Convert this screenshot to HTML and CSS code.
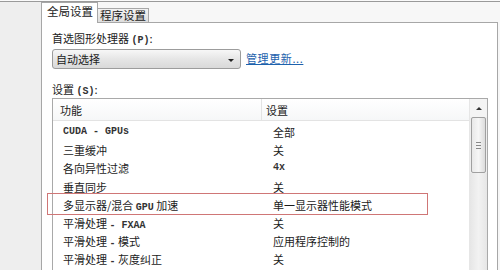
FILE: index.html
```html
<!DOCTYPE html>
<html>
<head>
<meta charset="utf-8">
<link rel="stylesheet" href="styles.css">
</head>
<body>
<div class="win">
  <div class="side"></div>
  <div class="main">
    <div class="tabs">
      <div class="tab active">全局设置</div>
      <div class="tab">程序设置</div>
    </div>
    <div class="panel">
      <div class="label">首选图形处理器 <span class="lat">(P)</span>:</div>
      <div class="pickrow">
        <div class="combo"><span>自动选择</span><span class="arrow"></span></div>
        <a class="link">管理更新...</a>
      </div>
      <div class="label label2">设置 <span class="lat">(S)</span>:</div>
      <div class="list">
        <div class="grid">
          <div class="head"><div class="h1">功能</div><div class="h2">设置</div></div>
          <div class="row"><div class="c1 lat">CUDA - GPUs</div><div class="c2">全部</div></div>
          <div class="row"><div class="c1">三重缓冲</div><div class="c2">关</div></div>
          <div class="row"><div class="c1">各向异性过滤</div><div class="c2 lat">4x</div></div>
          <div class="row"><div class="c1">垂直同步</div><div class="c2">关</div></div>
          <div class="row"><div class="c1">多显示器/混合 <span class="lat">GPU</span> 加速</div><div class="c2">单一显示器性能模式</div></div>
          <div class="row"><div class="c1">平滑处理 <span class="lat">- FXAA</span></div><div class="c2">关</div></div>
          <div class="row"><div class="c1">平滑处理 <span class="lat">-</span> 模式</div><div class="c2">应用程序控制的</div></div>
          <div class="row"><div class="c1">平滑处理 <span class="lat">-</span> 灰度纠正</div><div class="c2">关</div></div>
        </div>
        <div class="scroll">
          <div class="sbtn"><span class="up"></span></div>
          <div class="thumb"><span class="grip"></span></div>
          <div class="track"></div>
        </div>
        <div class="mark"></div>
      </div>
    </div>
  </div>
</div>
</body>
</html>
```
FILE: styles.css
```css
html, body {
  margin: 0;
  padding: 0;
  background: #fafafa;
  overflow: hidden;
}
body {
  font-family: "Noto Sans CJK SC", "Noto Sans", sans-serif;
  font-size: 11px;
  color: #1b1b1b;
}
.lat {
  font-family: "Liberation Mono", "DejaVu Sans Mono", monospace;
  font-size: 10px;
  font-weight: bold;
  color: #333;
}
.win {
  margin-top: 1px;
  border-top: 1px solid #9a9a9a;
  height: 268px;
  display: flex;
}
.side {
  width: 41px;
  background: #eeeeee;
  flex: none;
}
.main {
  flex: 1;
  display: flex;
  flex-direction: column;
  padding-right: 2px;
  background: #f7f7f7;
}
.tabs {
  height: 20px;
  display: flex;
  align-items: flex-end;
  position: relative;
  z-index: 1;
}
.tab {
  box-sizing: border-box;
  height: 14px;
  width: 51px;
  flex: none;
  border: 1px solid #a7a7a7;
  border-bottom: none;
  border-left: none;
  background: linear-gradient(#f3f3f3, #dddddd);
  font-size: 11.5px;
  line-height: 13px;
  padding-left: 2px;
  white-space: nowrap;
  overflow: hidden;
}
.tab.active {
  height: 21px;
  width: 57px;
  border-left: 1px solid #a7a7a7;
  background: #fff;
  padding-left: 5px;
  line-height: 17px;
  margin-bottom: -1px;
}
.panel {
  flex: 1;
  background: #fff;
  border: 1px solid #a7a7a7;
  border-bottom: none;
  padding: 8px 0 0 10px;
}
.label {
  height: 14px;
  line-height: 14px;
}
.label2 {
  margin-top: 13px;
}
.pickrow {
  display: flex;
  align-items: center;
  margin-top: 4px;
}
.combo {
  box-sizing: border-box;
  width: 189px;
  height: 20px;
  border: 1px solid #9c9c9c;
  border-radius: 3px;
  background: linear-gradient(#f7f7f7, #e4e4e4 55%, #d9d9d9);
  display: flex;
  align-items: center;
  justify-content: space-between;
  padding: 0 6px 0 3px;
}
.arrow {
  width: 0;
  height: 0;
  border-left: 3px solid transparent;
  border-right: 3px solid transparent;
  border-top: 3px solid #222;
  margin-top: 2px;
}
.link {
  margin-left: 5px;
  color: #1d62ad;
  text-decoration: underline;
  line-height: 14px;
  margin-top: -2px;
  letter-spacing: 0.6px;
}
.list {
  position: relative;
  box-sizing: border-box;
  margin-top: 2px;
  width: 436px;
  height: 180px;
  border: 1px solid #a9a9a9;
  border-bottom: none;
  display: flex;
}
.grid {
  flex: 1;
}
.head {
  height: 22px;
  box-sizing: border-box;
  border-bottom: 1px solid #e3e3e3;
  background: linear-gradient(#ffffff, #f6f7f8);
  display: flex;
  align-items: center;
}
.h1 {
  width: 209px;
  box-sizing: border-box;
  padding-left: 7px;
  border-right: 1px solid #e3e3e3;
  height: 22px;
  line-height: 22px;
}
.h2 {
  padding-left: 4px;
}
.row {
  height: 18.2px;
  line-height: 18.2px;
  display: flex;
  white-space: nowrap;
}
.head + .row {
  margin-top: 2px;
}
.c1 {
  box-sizing: border-box;
  width: 220px;
  padding-left: 10px;
  flex: none;
}
.c2 {
  width: 150px;
}
.scroll {
  width: 17px;
  flex: none;
  display: flex;
  flex-direction: column;
  background: #eeeeee;
  border-left: 1px solid #e6e6e6;
}
.sbtn {
  height: 18px;
  display: flex;
  align-items: center;
  justify-content: center;
  background: #f4f4f4;
}
.up {
  width: 0;
  height: 0;
  border-left: 3px solid transparent;
  border-right: 3px solid transparent;
  border-bottom: 3px solid #333;
}
.thumb {
  box-sizing: border-box;
  height: 56px;
  margin: 0 1px;
  border: 1px solid #a0a0a0;
  border-radius: 2px;
  background: linear-gradient(90deg, #e8e8e8, #f6f6f6 50%, #dcdcdc);
  display: flex;
  align-items: center;
  justify-content: center;
}
.grip {
  width: 5px;
  height: 5px;
  border-top: 1px solid #888;
  border-bottom: 1px solid #888;
  background: linear-gradient(#888, #888) center / 5px 1px no-repeat;
}
.track {
  flex: 1;
  background: linear-gradient(90deg, #e6e6e6, #f2f2f2 50%, #e6e6e6);
}
.mark {
  position: absolute;
  left: -6px;
  top: 94px;
  width: 381px;
  height: 22px;
  box-sizing: border-box;
  border: 1px solid #cf7676;
}
```
